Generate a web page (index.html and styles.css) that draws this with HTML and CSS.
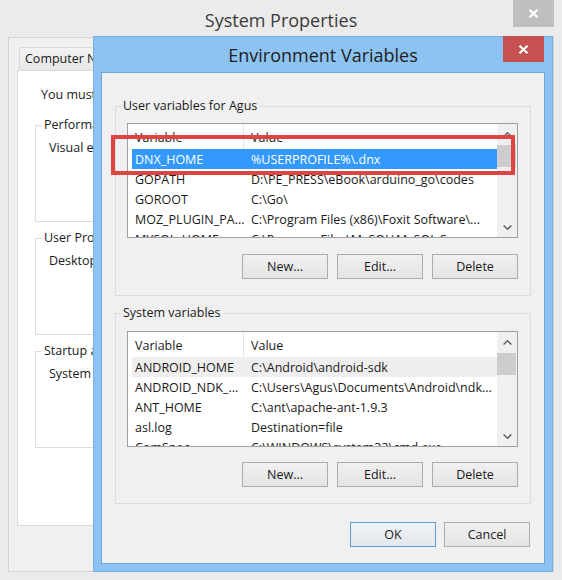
FILE: index.html
```html
<!DOCTYPE html>
<html lang="en">
<head>
<meta charset="utf-8">
<title>Environment Variables</title>
<link rel="stylesheet" href="styles.css">
</head>
<body>
<div class="sysprops">
  <div class="sp-titlebar">
    <span class="sp-title">System Properties</span>
    <span class="sp-close"><svg width="11" height="9" viewBox="0 0 11 9"><path d="M1.5 0.8L9.5 8.2M9.5 0.8L1.5 8.2" stroke="#fff" stroke-width="2.2" fill="none"/></svg></span>
  </div>
  <div class="sp-client">
    <div class="sp-tabs">
      <div class="sp-tab">Computer Name</div>
    </div>
    <div class="sp-panel">
      <p class="sp-notice">You must be logged on as an Administrator to make most of these changes.</p>
      <fieldset class="sp-group">
        <legend>Performance</legend>
        <p class="sp-text">Visual effects, processor scheduling, memory usage, and virtual memory</p>
      </fieldset>
      <fieldset class="sp-group">
        <legend>User Profiles</legend>
        <p class="sp-text">Desktop settings related to your sign-in</p>
      </fieldset>
      <fieldset class="sp-group">
        <legend>Startup and Recovery</legend>
        <p class="sp-text">System startup, system failure, and debugging information</p>
      </fieldset>
    </div>
  </div>
</div>

<div class="env">
  <div class="env-titlebar">
    <span class="env-title">Environment Variables</span>
    <span class="env-close"><svg width="11" height="9" viewBox="0 0 11 9"><path d="M1.5 0.8L9.5 8.2M9.5 0.8L1.5 8.2" stroke="#fff" stroke-width="2.2" fill="none"/></svg></span>
  </div>
  <div class="env-client">
    <fieldset class="grp">
      <legend>User variables for Agus</legend>
      <div class="lv">
        <div class="lv-main">
          <div class="lv-head"><span class="lv-c1">Variable</span><span class="lv-c2">Value</span></div>
          <div class="lv-row sel"><span class="lv-c1">DNX_HOME</span><span class="lv-c2">%USERPROFILE%\.dnx</span></div>
          <div class="lv-row"><span class="lv-c1">GOPATH</span><span class="lv-c2">D:\PE_PRESS\eBook\arduino_go\codes</span></div>
          <div class="lv-row"><span class="lv-c1">GOROOT</span><span class="lv-c2">C:\Go\</span></div>
          <div class="lv-row"><span class="lv-c1">MOZ_PLUGIN_PA...</span><span class="lv-c2">C:\Program Files (x86)\Foxit Software\...</span></div>
          <div class="lv-row"><span class="lv-c1">MYSQL_HOME</span><span class="lv-c2">C:\Program Files\MySQL\MySQL S...</span></div>
        </div>
        <div class="sb">
          <div class="sb-btn"><svg width="9" height="5" viewBox="0 0 9 5"><path d="M0.6 4.5L4.5 0.8L8.4 4.5" stroke="#5a5a5a" stroke-width="1.4" fill="none"/></svg></div>
          <div class="sb-thumb"></div>
          <div class="sb-track"></div>
          <div class="sb-btn"><svg width="9" height="5" viewBox="0 0 9 5"><path d="M0.6 0.5L4.5 4.2L8.4 0.5" stroke="#5a5a5a" stroke-width="1.4" fill="none"/></svg></div>
        </div>
      </div>
      <div class="grp-actions">
        <button class="btn">New...</button>
        <button class="btn">Edit...</button>
        <button class="btn">Delete</button>
      </div>
    </fieldset>

    <fieldset class="grp grp-sys">
      <legend>System variables</legend>
      <div class="lv lv-sys">
        <div class="lv-main">
          <div class="lv-head"><span class="lv-c1">Variable</span><span class="lv-c2">Value</span></div>
          <div class="lv-row dim"><span class="lv-c1">ANDROID_HOME</span><span class="lv-c2">C:\Android\android-sdk</span></div>
          <div class="lv-row"><span class="lv-c1">ANDROID_NDK_...</span><span class="lv-c2">C:\Users\Agus\Documents\Android\ndk...</span></div>
          <div class="lv-row"><span class="lv-c1">ANT_HOME</span><span class="lv-c2">C:\ant\apache-ant-1.9.3</span></div>
          <div class="lv-row"><span class="lv-c1">asl.log</span><span class="lv-c2">Destination=file</span></div>
          <div class="lv-row"><span class="lv-c1">ComSpec</span><span class="lv-c2">C:\WINDOWS\system32\cmd.exe</span></div>
        </div>
        <div class="sb">
          <div class="sb-btn"><svg width="9" height="5" viewBox="0 0 9 5"><path d="M0.6 4.5L4.5 0.8L8.4 4.5" stroke="#5a5a5a" stroke-width="1.4" fill="none"/></svg></div>
          <div class="sb-thumb"></div>
          <div class="sb-track"></div>
          <div class="sb-btn"><svg width="9" height="5" viewBox="0 0 9 5"><path d="M0.6 0.5L4.5 4.2L8.4 0.5" stroke="#5a5a5a" stroke-width="1.4" fill="none"/></svg></div>
        </div>
      </div>
      <div class="grp-actions">
        <button class="btn">New...</button>
        <button class="btn">Edit...</button>
        <button class="btn">Delete</button>
      </div>
    </fieldset>

    <div class="env-actions">
      <button class="btn btn-default">OK</button>
      <button class="btn">Cancel</button>
    </div>
  </div>
  <div class="callout"></div>
</div>
</body>
</html>
```
FILE: styles.css
```css
* { box-sizing: border-box; }
html, body { margin: 0; padding: 0; }
body {
  width: 562px;
  height: 580px;
  overflow: hidden;
  position: relative;
  font-family: "Open Sans", "Noto Sans", sans-serif;
  font-size: 12.5px;
  color: #1a1a1a;
  background: #ebebeb;
}

/* ---------- System Properties (background window) ---------- */
.sysprops {
  width: 562px;
  height: 580px;
  background: #ebebeb;
}
.sp-titlebar {
  height: 37px;
  display: grid;
  grid-template-columns: 1fr auto 1fr;
  padding: 0 8px;
}
.sp-title {
  grid-column: 2;
  align-self: center;
  padding-top: 3px;
  font-size: 18px;
  color: #3b3b3b;
  white-space: nowrap;
}
.sp-close {
  grid-column: 3;
  justify-self: end;
  align-self: start;
  width: 41px;
  height: 27px;
  background: #bfbfbf;
  display: flex;
  align-items: center;
  justify-content: center;
}
.sp-client {
  margin: 0 8px;
  height: 535px;
  background: #f0f0f0;
  border: 1px solid #d3d3d3;
  padding: 9px 8px 0 8px;
  overflow: hidden;
}
.sp-tabs {
  display: flex;
  width: 100px;
  height: 23px;
  padding-left: 2px;
  overflow: hidden;
}
.sp-tab {
  border: 1px solid #d9d9d9;
  border-bottom: none;
  background: linear-gradient(#f3f3f3, #e8e8e8);
  padding: 0 5px;
  line-height: 21px;
  white-space: nowrap;
}
/* the panel continues under the dialog; only its left part is ever visible */
.sp-panel {
  height: 456px;
  width: 100px;
  overflow: hidden;
  background: #fff;
  border: 1px solid #d9d9d9;
  padding: 16px 0 0 17px;
}
.sp-notice {
  margin: 0 0 14px 6px;
  line-height: 16px;
  white-space: nowrap;
}
.sp-group {
  margin: 0 0 8px 0;
  width: 500px;
  height: 105px;
  border: 1px solid #dcdcdc;
  padding: 7px 0 0 13px;
  min-width: 0;
}
.sp-group legend {
  padding: 0 2px;
  margin-left: -7px;
  line-height: 16px;
  white-space: nowrap;
}
.sp-text {
  margin: 0;
  line-height: 16px;
  white-space: nowrap;
}

/* ---------- Environment Variables dialog ---------- */
.env {
  position: absolute;
  left: 93px;
  top: 36px;
  width: 460px;
  height: 536px;
  background: #8dc3f2;
  border: 1px solid #79b0e2;
  padding: 0 7px 7px;
  display: flex;
  flex-direction: column;
}
.env-titlebar {
  flex: none;
  height: 35px;
  display: grid;
  grid-template-columns: 1fr auto 1fr;
}
.env-title {
  grid-column: 2;
  align-self: center;
  font-size: 18px;
  color: #1e1e1e;
  white-space: nowrap;
}
.env-close {
  grid-column: 3;
  justify-self: end;
  align-self: start;
  width: 41px;
  height: 26px;
  margin-top: -1px;
  margin-right: 1px;
  background: #c75050;
  display: flex;
  align-items: center;
  justify-content: center;
}
.env-client {
  flex: 1;
  background: #f0f0f0;
  border: 1px solid #6fa6da;
  padding: 25px 13px 0 13px;
}

.grp {
  margin: 0;
  min-width: 0;
  border: 1px solid #dcdcdc;
  padding: 9px 12px 16px 11px;
}
.grp legend {
  padding: 0 2px;
  margin-left: -6px;
  line-height: 16px;
}
.grp-sys {
  margin-top: 9px;
  padding-top: 10px;
}

.lv {
  display: flex;
  height: 115px;
  border: 1px solid #a0a0a0;
  background: #fff;
  overflow: hidden;
}
.lv-sys { height: 116px; }
.lv-main {
  flex: 1;
  min-width: 0;
  padding-left: 4px;
}
.lv-head {
  display: flex;
  height: 25px;
}
.lv-head .lv-c1 { border-right: 1px solid #e5e5e5; }
.lv-head span {
  display: flex;
  align-items: center;
  padding-top: 2px;
}
.lv-row {
  display: flex;
  height: 20px;
  align-items: center;
}
.lv-c1 {
  flex: none;
  width: 112px;
  padding-left: 3px;
  white-space: nowrap;
  overflow: hidden;
}
.lv-c2 {
  flex: 1;
  min-width: 0;
  padding-left: 7px;
  white-space: nowrap;
  overflow: hidden;
}
.lv-row.sel { background: #3399ff; color: #fff; }
.lv-row.dim { background: #eeeeee; }

.sb {
  flex: none;
  width: 20px;
  background: #f0f0f0;
  display: flex;
  flex-direction: column;
}
.sb-btn {
  flex: none;
  height: 20px;
  display: flex;
  align-items: center;
  justify-content: center;
}
.sb-thumb {
  flex: none;
  height: 22px;
  margin: 1px 1px 0 0;
  background: #cdcdcd;
}
.sb-track { flex: 1; }

.grp-actions {
  display: flex;
  justify-content: flex-end;
  gap: 9px;
  margin-top: 16px;
}
.grp-sys .grp-actions { margin-top: 15px; }

.btn {
  width: 86px;
  height: 25px;
  padding: 0;
  border: 1px solid #acacac;
  border-radius: 0;
  background: linear-gradient(#f0f0f0, #e5e5e5);
  font: inherit;
  color: #1a1a1a;
}
.btn-default {
  border-color: #5c9fd8;
  background: linear-gradient(#f0f3f6, #e3e8ee);
}

.env-actions {
  display: flex;
  justify-content: flex-end;
  gap: 8px;
  margin-top: 18px;
  padding-right: 1px;
}

/* hand-drawn annotation over the selected row */
.callout {
  position: absolute;
  left: 17px;
  top: 98px;
  width: 404px;
  height: 40px;
  border: 4px solid #dd4540;
}
```
